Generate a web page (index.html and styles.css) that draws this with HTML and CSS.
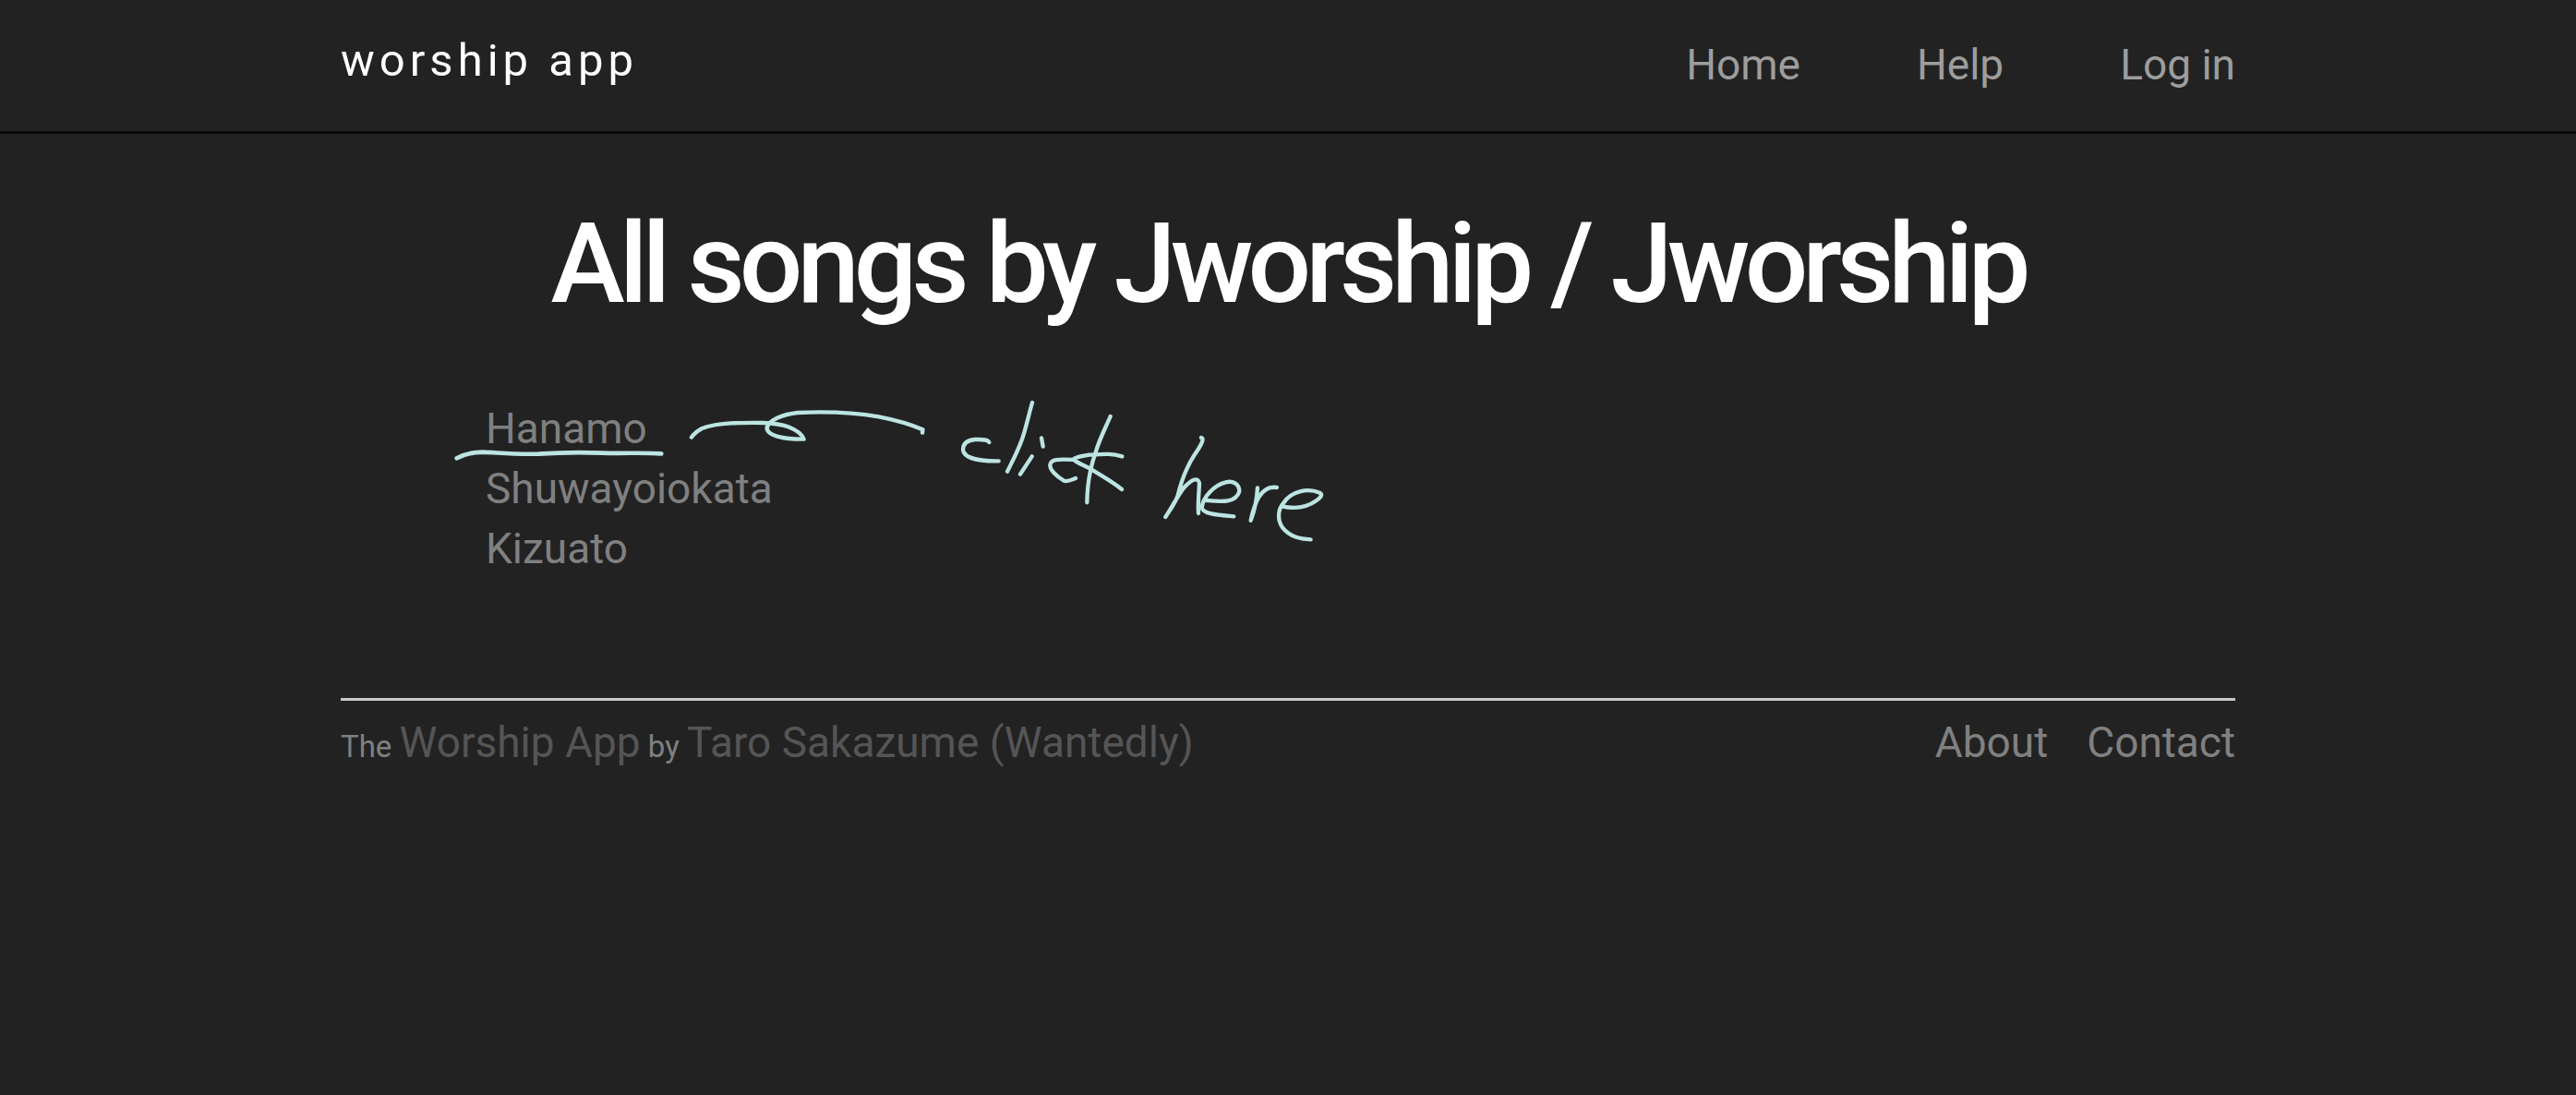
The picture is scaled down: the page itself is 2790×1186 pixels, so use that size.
FILE: index.html
```html
<!DOCTYPE html>
<html lang="en">
<head>
<meta charset="utf-8">
<meta name="viewport" content="width=device-width, initial-scale=1">
<title>All songs by Jworship | Worship App</title>
<link rel="stylesheet" href="styles.css">
</head>
<body>
<header class="navbar">
  <div class="container navbar-inner">
    <a class="logo" href="#">worship app</a>
    <nav class="nav">
      <a href="#">Home</a>
      <a href="#">Help</a>
      <a href="#">Log in</a>
    </nav>
  </div>
</header>
<div class="container">
  <main>
    <h1 class="title">All songs by Jworship / Jworship</h1>
    <div class="songs">
      <ul class="song-list">
        <li><a href="#">Hanamo</a></li>
        <li><a href="#">Shuwayoiokata</a></li>
        <li><a href="#">Kizuato</a></li>
      </ul>
      <svg class="note" viewBox="0 0 970 180" role="img" aria-label="click here">
        <g transform="scale(.3444 .3333)">
          <path class="thick" d="M43 229C65 216 85 209 125 209C175 211 220 217 300 215C370 210 430 209 500 212C570 214 630 210 686 214"/>
          <path d="M781 161C790 147 800 140 812 133C840 121 870 117 905 115C970 113 1040 110 1085 127C1110 137 1128 150 1134 167C1080 168 1018 158 1018 130C1024 104 1070 86 1115 81C1200 77 1290 80 1370 94C1430 106 1475 121 1508 136L1507 146"/>
        </g>
        <g transform="translate(530) scale(.3333)">
          <path d="M184 177C178 166 160 168 138 168C112 170 99 181 99 202C103 230 155 239 215 238"/>
          <path d="M324 48C315 80 308 110 298 145C286 190 264 230 243 272"/>
          <path d="M323 223L285 281M354 163L359 191"/>
          <path d="M465 294C450 300 436 307 427 302C402 288 381 266 382 252C383 230 410 232 460 234"/>
          <path d="M578 93C560 135 543 165 530 210C510 265 503 310 502 373"/>
          <path d="M616 223C580 212 550 216 510 218C490 221 470 224 461 230C460 242 480 245 512 263C550 286 585 305 615 330"/>
          <path d="M873 162C885 165 872 188 852 217C822 262 808 305 797 350C786 380 772 396 757 420C780 385 800 345 817 325C840 300 862 287 867 310C866 340 862 375 864 408"/>
          <path d="M890 366C940 370 985 375 997 337C997 312 975 301 953 307C915 316 878 355 875 390C880 412 935 414 979 418"/>
          <path d="M1056 325C1054 365 1048 395 1034 431C1045 380 1065 315 1119 324"/>
          <path d="M1135 385C1180 395 1215 390 1247 367C1262 357 1269 348 1258 341C1220 325 1165 335 1140 375C1122 395 1120 430 1137 454C1162 485 1195 491 1229 493"/>
        </g>
      </svg>
    </div>
  </main>
  <footer class="footer">
    <small>The <a href="#">Worship App</a> by <a href="#">Taro Sakazume (Wantedly)</a></small>
    <nav class="footer-nav">
      <a href="#">About</a>
      <a href="#">Contact</a>
    </nav>
  </footer>
</div>
</body>
</html>
```
FILE: styles.css
```css
* { box-sizing: border-box; }

body {
  margin: 0;
  background: #222;
  color: #fff;
  font-family: Roboto, sans-serif;
  font-size: 46px;
  line-height: 65px;
}

a { color: #808080; text-decoration: none; }
a:hover { color: #fff; }

.container {
  width: calc(100% - 108px);
  max-width: 2052px;
  margin: 0 auto;
}

.navbar { border-bottom: 3px solid #080808; }

.navbar-inner {
  display: flex;
  justify-content: space-between;
  align-items: flex-start;
  padding: 33px 0 39px;
}

.logo {
  color: #fff;
  font-size: 49px;
  letter-spacing: 5px;
}

.nav {
  display: flex;
  gap: 126px;
  padding-top: 5px;
}
.nav a { color: #9d9d9d; }

.title {
  margin: 71px 0 76px;
  font-size: 121px;
  font-weight: 500;
  line-height: 140px;
  letter-spacing: -6px;
  text-align: center;
}

.songs {
  position: relative;
  padding-left: 157px;
}

.song-list {
  margin: 0;
  padding: 0;
  list-style: none;
}

.note {
  position: absolute;
  left: 111px;
  top: -12px;
  width: 970px;
  height: 180px;
  fill: none;
  stroke: #bce4e2;
  stroke-width: 13px;
  stroke-linecap: round;
  stroke-linejoin: round;
  pointer-events: none;
}
.note .thick { stroke-width: 14px; }

.footer {
  display: flex;
  justify-content: space-between;
  margin-top: 129px;
  padding-top: 13px;
  border-top: 3px solid #c8c8c8;
}
.footer small { color: #808080; font-size: 33px; }
.footer small a { color: #555; font-size: 46px; }

.footer-nav { display: flex; gap: 42px; }
```
